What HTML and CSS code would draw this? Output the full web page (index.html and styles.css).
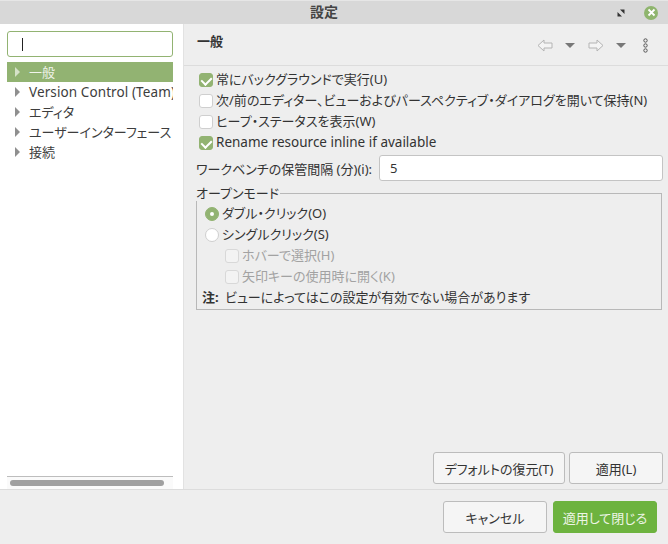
FILE: index.html
```html
<!DOCTYPE html>
<html lang="ja">
<head>
    <meta charset="UTF-8">
    <title>設定</title>
    <link rel="stylesheet" href="styles.css">
</head>
<body>
    <div class="window">
        <div class="titlebar">
            <div class="titlebar-title">設定</div>
            <svg class="win-restore" width="8" height="8" viewBox="0 0 8 8">
                <path d="M3 0.5h4.5v4.5zM5 7.5h-4.5v-4.5z" fill="#333"/>
            </svg>
            <div class="win-close">
                <svg width="9" height="9" viewBox="0 0 9 9">
                    <path d="M1.5 1.5l6 6M7.5 1.5l-6 6" stroke="#fff" stroke-width="1.8"/>
                </svg>
            </div>
        </div>

        <div class="main">
            <div class="sidebar">
                <div class="search"><span class="caret"></span></div>
                <div class="tree">
                    <div class="tree-item selected"><span class="arrow"></span>一般</div>
                    <div class="tree-item latin"><span class="arrow"></span>Version Control (Team)</div>
                    <div class="tree-item"><span class="arrow"></span>エディタ</div>
                    <div class="tree-item"><span class="arrow"></span>ユーザーインターフェース</div>
                    <div class="tree-item"><span class="arrow"></span>接続</div>
                </div>
                <div class="hscroll"><div class="hscroll-thumb"></div></div>
            </div>

            <div class="content">
                <div class="content-head">
                    <div class="page-title">一般</div>
                    <div class="toolbar">
                        <svg class="tool-arrow" width="16" height="13" viewBox="0 0 16 13">
                            <path d="M1 6.5l6-5.5v3h8v5h-8v3z" fill="#f4f4f4" stroke="#b4b4b4"/>
                        </svg>
                        <span class="tool-drop"></span>
                        <svg class="tool-arrow" width="16" height="13" viewBox="0 0 16 13">
                            <path d="M15 6.5l-6-5.5v3h-8v5h8v3z" fill="#f4f4f4" stroke="#b4b4b4"/>
                        </svg>
                        <span class="tool-drop"></span>
                        <svg class="tool-menu" width="5" height="15" viewBox="0 0 5 15">
                            <circle cx="2.5" cy="2.5" r="1.7" fill="none" stroke="#555"/>
                            <circle cx="2.5" cy="7.5" r="1.7" fill="none" stroke="#555"/>
                            <circle cx="2.5" cy="12.5" r="1.7" fill="none" stroke="#555"/>
                        </svg>
                    </div>
                </div>

                <div class="form">
                    <div class="check-row"><span class="check on"></span>常にバックグラウンドで実行(U)</div>
                    <div class="check-row"><span class="check"></span>次/前のエディター、ビューおよびパースペクティブ・ダイアログを開いて保持(N)</div>
                    <div class="check-row"><span class="check"></span>ヒープ・ステータスを表示(W)</div>
                    <div class="check-row latin-row"><span class="check on"></span>Rename resource inline if available</div>
                    <div class="field-row">
                        <label class="field-label">ワークベンチの保管間隔 (分)(i):</label>
                        <div class="field-input">5</div>
                    </div>
                    <fieldset class="group">
                        <legend>オープンモード</legend>
                        <div class="radio-row"><span class="radio on"></span>ダブル・クリック(O)</div>
                        <div class="radio-row"><span class="radio"></span>シングルクリック(S)</div>
                        <div class="sub-row disabled"><span class="check"></span>ホバーで選択(H)</div>
                        <div class="sub-row disabled"><span class="check"></span>矢印キーの使用時に開く(K)</div>
                        <div class="note"><b>注:</b> ビューによってはこの設定が有効でない場合があります</div>
                    </fieldset>
                </div>

                <div class="page-buttons">
                    <button class="btn btn-defaults">デフォルトの復元(T)</button>
                    <button class="btn btn-apply">適用(L)</button>
                </div>
            </div>
        </div>

        <div class="footer">
            <button class="btn btn-cancel">キャンセル</button>
            <button class="btn btn-primary">適用して閉じる</button>
        </div>
    </div>
</body>
</html>
```

FILE: styles.css
```css
* {
    box-sizing: border-box;
    margin: 0;
    padding: 0;
}

html, body {
    height: 100%;
}

body {
    font-family: "Noto Sans", "Noto Sans CJK JP", sans-serif;
    font-size: 13px;
    font-feature-settings: "palt";
    color: #333;
    background-color: #eee;
    overflow: hidden;
}

/* latin rows run a bit wider than the japanese ones */
.latin {
    font-size: 13.5px;
    letter-spacing: 0.1px;
}

.latin-row {
    font-size: 13.5px;
}

.window {
    display: flex;
    flex-direction: column;
    height: 544px;
}

/* title bar */
.titlebar {
    position: relative;
    height: 24px;
    flex: none;
    display: flex;
    align-items: center;
    justify-content: flex-end;
    background-color: #d8d8d8;
    border-top: 1px solid #e6e6e6;
}

.titlebar-title {
    position: absolute;
    left: 0;
    right: 20px;
    top: 0;
    text-align: center;
    font-weight: 700;
    font-size: 14px;
    color: #444;
}

.win-restore {
    margin-right: 19px;
}

.win-close {
    width: 14px;
    height: 14px;
    margin-right: 10px;
    border-radius: 50%;
    background-color: #8fb56e;
    display: flex;
    align-items: center;
    justify-content: center;
}

.main {
    flex: 1;
    display: flex;
    min-height: 0;
}

/* left tree */
.sidebar {
    width: 184px;
    flex: none;
    display: flex;
    flex-direction: column;
    background-color: #fff;
    border-right: 1px solid #e2e2e2;
    padding: 7px 10px 0 7px;
}

.search {
    height: 26px;
    flex: none;
    display: flex;
    align-items: center;
    padding-left: 14px;
    border: 1px solid #92b372;
    border-radius: 3px;
}

.caret {
    width: 1px;
    height: 13px;
    background-color: #222;
}

.tree {
    flex: 1;
    margin-top: 5px;
    overflow: hidden;
}

.tree-item {
    height: 20px;
    line-height: 20px;
    display: flex;
    align-items: center;
    white-space: nowrap;
    overflow: hidden;
    color: #3d3d3d;
}

.tree-item.selected {
    background-color: #92b372;
    color: #f1f4ec;
}

.arrow {
    flex: none;
    width: 0;
    height: 0;
    margin: 0 9px 0 8px;
    border-top: 5px solid transparent;
    border-bottom: 5px solid transparent;
    border-left: 5px solid #8f8f8f;
}

.tree-item.selected .arrow {
    border-left-color: #d6e2c8;
}

.hscroll {
    height: 13px;
    flex: none;
    display: flex;
    align-items: center;
    padding: 0 9px 0 3px;
    border-top: 1px solid #bdbdbd;
    background-color: #fafafa;
}

.hscroll-thumb {
    flex: 1;
    height: 6px;
    border-radius: 3px;
    background-color: #a0a0a0;
}

/* right page */
.content {
    flex: 1;
    min-width: 0;
    display: flex;
    flex-direction: column;
}

.content-head {
    height: 42px;
    flex: none;
    display: flex;
    align-items: flex-start;
    justify-content: space-between;
    border-bottom: 1px solid #dcdcdc;
    padding: 7px 20px 0 13px;
}

.page-title {
    font-weight: 700;
    line-height: 20px;
}

.toolbar {
    display: flex;
    align-items: center;
    margin-top: 7px;
}

.tool-arrow {
    margin-right: 12px;
}

.tool-drop {
    width: 0;
    height: 0;
    margin-right: 13px;
    border-left: 5px solid transparent;
    border-right: 5px solid transparent;
    border-top: 5px solid #777;
}

.tool-menu {
    margin-left: 4px;
}

.form {
    padding: 2px 5px 0 12px;
}

.check-row {
    height: 21px;
    display: flex;
    align-items: center;
    padding-left: 3px;
    white-space: nowrap;
}

.check {
    position: relative;
    flex: none;
    width: 14px;
    height: 14px;
    margin: 2px 3px 0 0;
    background-color: #fff;
    border: 1px solid #cfcfcf;
    border-radius: 3px;
}

.check.on {
    background-color: #92b372;
    border-color: #92b372;
}

/* tick */
.check.on::after {
    content: "";
    position: absolute;
    left: 3px;
    top: 1px;
    width: 5px;
    height: 8px;
    border-right: 2px solid #fff;
    border-bottom: 2px solid #fff;
    transform: rotate(45deg);
}

.field-row {
    display: flex;
    align-items: center;
    height: 26px;
    margin-top: 3px;
}

.field-label {
    width: 183px;
    flex: none;
    white-space: nowrap;
}

.field-input {
    flex: 1;
    height: 26px;
    line-height: 24px;
    padding-left: 10px;
    background-color: #fff;
    border: 1px solid #c4c4c4;
    border-radius: 3px;
}

.group {
    margin-top: 4px;
    margin-right: 1px;
    height: 125px;
    border: 1px solid #b8b8b8;
    padding: 1px 0 0 7px;
}

.group legend {
    line-height: 16px;
    margin-left: -8px;
    padding: 0 1px 0 0;
}

.radio-row {
    height: 21px;
    display: flex;
    align-items: center;
    margin-left: 1px;
    white-space: nowrap;
}

.radio {
    position: relative;
    flex: none;
    width: 14px;
    height: 14px;
    margin: 2px 3px 0 0;
    background-color: #fff;
    border: 1px solid #cfcfcf;
    border-radius: 50%;
}

.radio.on {
    background-color: #92b372;
    border-color: #92b372;
}

.radio.on::after {
    content: "";
    position: absolute;
    left: 4px;
    top: 4px;
    width: 4px;
    height: 4px;
    border-radius: 50%;
    background-color: #fff;
}

.sub-row {
    height: 21px;
    display: flex;
    align-items: center;
    margin-left: 21px;
    white-space: nowrap;
}

.disabled {
    color: #a2a2a2;
}

.disabled .check {
    background-color: #f3f3f3;
    border-color: #d8d8d8;
}

.note {
    height: 20px;
    line-height: 20px;
    margin: 1px 0 0 -2px;
    white-space: nowrap;
}

.note b {
    margin-right: 3px;
}

.page-buttons {
    margin-top: auto;
    display: flex;
    justify-content: flex-end;
    gap: 4px;
    padding: 0 5px 5px 0;
}

.btn {
    height: 32px;
    font-family: inherit;
    font-size: 13px;
    font-feature-settings: inherit;
    color: #333;
    background-color: #f5f5f5;
    border: 1px solid #bcbcbc;
    border-radius: 3px;
}

.btn-defaults {
    width: 132px;
}

.btn-apply {
    width: 94px;
}

.footer {
    height: 55px;
    flex: none;
    display: flex;
    justify-content: flex-end;
    gap: 6px;
    padding: 11px 11px 0 0;
    border-top: 1px solid #dcdcdc;
    background-color: #eee;
}

.btn-cancel {
    width: 104px;
}

.btn-primary {
    width: 104px;
    color: #eef5e6;
    background-color: #6db33f;
    border-color: #6db33f;
}
```
